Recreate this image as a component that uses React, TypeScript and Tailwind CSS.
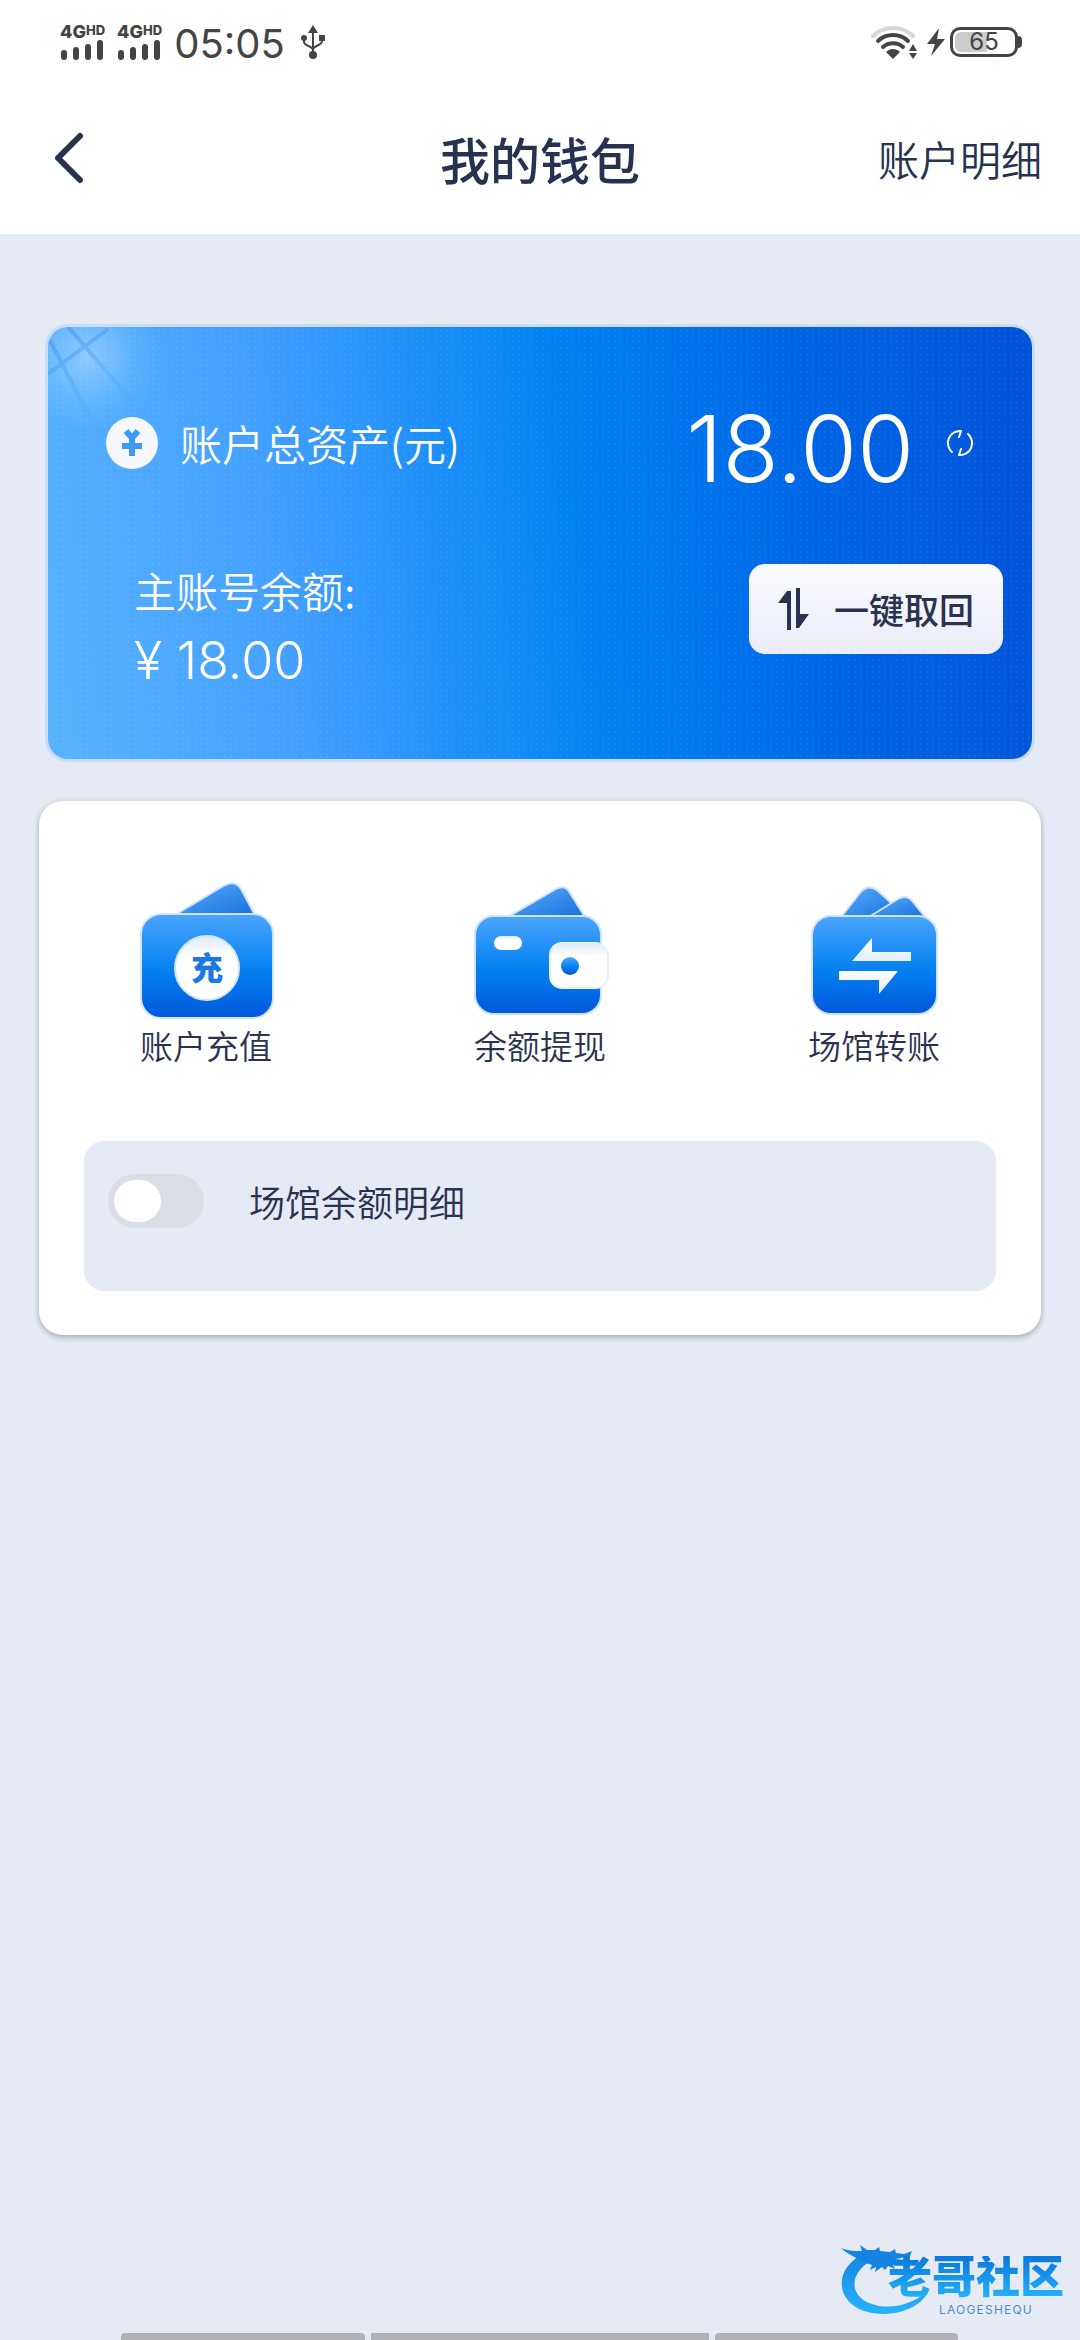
import React, { useState } from "react";

function SignalBars() {
  return (
    <div className="flex flex-col text-[#444]">
      <div className="flex items-start font-extrabold leading-4">
        <span className="text-[18px]">4G</span>
        <span className="text-[13px] leading-3">HD</span>
      </div>
      <div className="flex h-5 items-end gap-[6px] pl-px">
        <span className="h-[10px] w-[6px] rounded-[3px] bg-[#444]" />
        <span className="h-[13px] w-[6px] rounded-[3px] bg-[#444]" />
        <span className="h-[16px] w-[6px] rounded-[3px] bg-[#444]" />
        <span className="h-5 w-[6px] rounded-[3px] bg-[#444]" />
      </div>
    </div>
  );
}

function UsbIcon() {
  return (
    <svg width="24" height="34" viewBox="0 0 24 34" fill="none" stroke="#444" strokeWidth="2">
      <path d="M12 6v24M3 14v3c0 4 9 4 9 8M21 12v4c0 5-9 4-9 9" />
      <path d="M12 0l5 8H7z" fill="#444" stroke="none" />
      <circle cx="12" cy="30" r="4" fill="#444" stroke="none" />
      <circle cx="3" cy="13" r="3" fill="#444" stroke="none" />
      <path d="M18 10h6v6h-6z" fill="#444" stroke="none" />
    </svg>
  );
}

function WifiIcon() {
  return (
    <svg width="48" height="36" viewBox="0 0 48 36" fill="none" strokeLinecap="round">
      <path d="M3 12a29 29 0 0 1 40 0" stroke="#d6d6d6" strokeWidth="4" />
      <path d="M8 17a22 22 0 0 1 30 0" stroke="#444" strokeWidth="4" />
      <path d="M13 23a15 15 0 0 1 20 0" stroke="#444" strokeWidth="4" />
      <path d="M16 28c4-4 10-4 14 0l-7 7z" fill="#444" />
      <path d="M39 27l4-7 4 7zM39 29h8l-4 6z" fill="#444" />
    </svg>
  );
}

function StatusBar() {
  return (
    <div className="flex h-[84px] items-center justify-between pl-[60px] pr-[58px] font-['Inter',sans-serif]">
      <div className="flex items-center">
        <SignalBars />
        <div className="ml-3">
          <SignalBars />
        </div>
        <span className="ml-3 pt-1 text-[40px] leading-10 text-[#444]">05:05</span>
        <div className="ml-4">
          <UsbIcon />
        </div>
      </div>
      <div className="flex items-center">
        <WifiIcon />
        <svg className="ml-2" width="20" height="30" viewBox="0 0 20 30" fill="#444">
          <path d="M13 1L1 17h8L5 29 19 12h-8z" />
        </svg>
        <div className="ml-1 flex items-center">
          <div className="relative flex h-[30px] w-[68px] items-center justify-center rounded-[10px] border-[3px] border-[#444]">
            <span className="absolute inset-y-[2px] left-[2px] w-8 rounded-l-md bg-[#ccc]" />
            <span className="relative text-[24px] leading-6 text-[#444]">65</span>
          </div>
          <span className="h-[12px] w-1 rounded-r-full bg-[#444]" />
        </div>
      </div>
    </div>
  );
}

function Header() {
  return (
    <header className="grid h-[150px] grid-cols-3 items-center px-[38px] pb-[2px] text-[#273250]">
      <button type="button" aria-label="返回" className="w-fit p-[15px]">
        <svg width="32" height="52" viewBox="0 0 32 52" fill="none" stroke="#273250" strokeWidth="6" strokeLinecap="round" strokeLinejoin="round">
          <path d="M27 4L5 26l22 22" />
        </svg>
      </button>
      <h1 className="text-center text-[50px] font-medium leading-[60px]">我的钱包</h1>
      <a href="#detail" className="text-right text-[41px] font-[350] leading-[60px]">
        账户明细
      </a>
    </header>
  );
}

function BalanceCard() {
  return (
    <section className="relative mx-12 overflow-hidden rounded-[20px] bg-[linear-gradient(82deg,#58b3ff_0%,#43a0ff_24%,#0082f2_54%,#0066e6_76%,#0051d8_100%)] pt-[68px] pb-[60px] text-white shadow-[0_0_0_3px_#c9dcf6]">
      {/* Fine dot texture */}
      <div className="absolute inset-0 bg-[radial-gradient(circle,rgba(255,255,255,0.06)_1px,transparent_1px)] bg-[length:6px_6px]" />
      {/* Corner glare */}
      <svg className="absolute left-0 top-0" width="140" height="120" viewBox="0 0 140 120" fill="none">
        <defs>
          <radialGradient id="glare" cx="40" cy="30" r="75" gradientUnits="userSpaceOnUse">
            <stop offset="0" stopColor="#fff" stopOpacity="0.35" />
            <stop offset="0.6" stopColor="#fff" stopOpacity="0.1" />
            <stop offset="1" stopColor="#fff" stopOpacity="0" />
          </radialGradient>
          <linearGradient id="ray" x1="0" y1="0" x2="60" y2="100" gradientUnits="userSpaceOnUse">
            <stop offset="0" stopColor="#3d95f5" stopOpacity="0.6" />
            <stop offset="1" stopColor="#3d95f5" stopOpacity="0" />
          </linearGradient>
        </defs>
        <path d="M0 0h140v120H0z" fill="url(#glare)" />
        <path d="M0 47L60 2M20 0l66 76M2 14l44 84" stroke="url(#ray)" strokeWidth="4" />
      </svg>

      <div className="relative flex h-24 items-center pl-[58px] pr-[58px]">
        <svg width="52" height="52" viewBox="0 0 52 52">
          <circle cx="26" cy="26" r="26" fill="#f6f8fe" />
          <path d="M20 14l6 7 6-7M16 29h20M26 22v17" fill="none" stroke="#3d9bf8" strokeWidth="6" />
        </svg>
        <span className="ml-[22px] text-[42px] font-[350] leading-[60px]">账户总资产(元)</span>
        <span className="ml-auto pt-3 font-['Inter',sans-serif] text-[92px] font-light leading-20">18.00</span>
        <button type="button" aria-label="刷新" className="ml-8">
          <svg width="28" height="28" viewBox="0 0 28 28" fill="none" stroke="#fff" strokeWidth="2" strokeLinecap="round" strokeLinejoin="round">
            <path d="M6 23A12 12 0 0 1 15 2l-2 6M22 5a12 12 0 0 1-9 21l2-6" />
          </svg>
        </button>
      </div>

      <div className="relative mt-[66px] flex items-start justify-between pl-[86px] pr-[29px]">
        <div>
          <p className="text-[42px] font-[350] leading-[66px]">主账号余额:</p>
          <p className="font-['Inter',sans-serif] text-[52px] font-light leading-[76px]">¥ 18.00</p>
        </div>
        <button type="button" className="mt-[7px] flex h-[90px] items-center gap-6 rounded-2xl bg-linear-to-b from-[#fbfcff] to-[#e9ecf9] px-[29px] text-[#2b3150]">
          <svg width="32" height="44" viewBox="0 0 32 44" fill="#2b3150">
            <path d="M9 4h4v39H9V16H0zM18 1h4v26h9L21 41h-3z" />
          </svg>
          <span className="text-[35px] font-medium leading-10">一键取回</span>
        </button>
      </div>
    </section>
  );
}

function WalletDefs() {
  return (
    <svg className="absolute" width="0" height="0" aria-hidden="true">
      <defs>
        <linearGradient id="walletBody" x1="0" y1="0" x2="0" y2="1">
          <stop offset="0" stopColor="#4aa5fc" />
          <stop offset="0.55" stopColor="#0480f0" />
          <stop offset="1" stopColor="#0257dc" />
        </linearGradient>
        <linearGradient id="walletFlap" x1="0" y1="0" x2="1" y2="1">
          <stop offset="0" stopColor="#5aaefc" />
          <stop offset="1" stopColor="#1670dd" />
        </linearGradient>
        <linearGradient id="walletWhite" x1="0" y1="0" x2="0" y2="1">
          <stop offset="0" stopColor="#dcebf5" />
          <stop offset="0.3" stopColor="#fff" />
        </linearGradient>
      </defs>
    </svg>
  );
}

function RechargeIcon() {
  return (
    <svg width="150" height="150" viewBox="0 0 150 150" stroke="#cfe3fb" strokeWidth="2">
      <path d="M44 40L94 10q10-5 16 4l14 26z" fill="url(#walletFlap)" />
      <rect x="10" y="39" width="132" height="104" rx="20" fill="url(#walletBody)" />
      <circle cx="76" cy="93" r="32" fill="url(#walletWhite)" />
      <text x="76" y="105" textAnchor="middle" fontSize="32" fontWeight="900" fill="#1a78e2" stroke="none">
        充
      </text>
    </svg>
  );
}

function WithdrawIcon() {
  return (
    <svg width="150" height="150" viewBox="0 0 150 150" stroke="#cfe3fb" strokeWidth="2">
      <path d="M43 42L91 14q9-5 14 4l15 24z" fill="url(#walletFlap)" />
      <rect x="10" y="41" width="126" height="98" rx="19" fill="url(#walletBody)" />
      <rect x="29" y="61" width="28" height="14" rx="7" fill="url(#walletWhite)" stroke="none" />
      <rect x="85" y="68" width="58" height="45" rx="12" fill="url(#walletWhite)" stroke="#e6f1f9" />
      <circle cx="105" cy="91" r="9" fill="url(#walletBody)" stroke="none" />
    </svg>
  );
}

function TransferIcon() {
  return (
    <svg width="150" height="150" viewBox="0 0 150 150" stroke="#cfe3fb" strokeWidth="2">
      <defs>
        <linearGradient id="arrowFill" x1="0" y1="63" x2="0" y2="119" gradientUnits="userSpaceOnUse">
          <stop offset="0" stopColor="#fff" />
          <stop offset="0.4" stopColor="#e3eefa" />
          <stop offset="0.6" stopColor="#fff" />
          <stop offset="1" stopColor="#dcebfa" />
        </linearGradient>
      </defs>
      <path d="M42 42L61 18q8-10 18-2l22 20v6z" fill="url(#walletFlap)" />
      <path d="M70 42l29-18q9-5 15 3l12 15z" fill="url(#walletFlap)" />
      <rect x="13" y="41" width="125" height="98" rx="19" fill="url(#walletBody)" />
      <path d="M53 86l20-23v14h39v9zM40 96h59l-19 23v-14H40z" fill="url(#arrowFill)" stroke="none" />
    </svg>
  );
}

const actions = [
  { label: "账户充值", icon: <RechargeIcon /> },
  { label: "余额提现", icon: <WithdrawIcon /> },
  { label: "场馆转账", icon: <TransferIcon /> },
];

function ActionsCard() {
  const [open, setOpen] = useState(false);

  return (
    <section className="mx-[39px] mt-[42px] rounded-3xl bg-white pt-[74px] pb-11 shadow-[0_2px_6px_rgba(0,0,0,0.3)]">
      <WalletDefs />
      <div className="grid grid-cols-3">
        {actions.map((action) => (
          <button key={action.label} type="button" className="flex flex-col items-center text-[#2b3150]">
            {action.icon}
            <span className="text-[33px] font-[350] leading-10">{action.label}</span>
          </button>
        ))}
      </div>

      <div className="mx-[45px] mt-[76px] h-[150px] rounded-[20px] bg-[#e6eaf5] pl-6 pt-[33px]">
        <label className="flex w-fit items-center gap-[45px] text-[#2b3150]">
          <input
            type="checkbox"
            checked={open}
            onChange={(e) => setOpen(e.target.checked)}
            className="h-[54px] w-24 appearance-none rounded-full bg-[#d9dde6] p-[6px] before:block before:h-[42px] before:w-[47px] before:rounded-full before:bg-white checked:bg-[#0480f0] checked:before:ml-auto"
          />
          <span className="text-[36px] font-[350] leading-[54px]">场馆余额明细</span>
        </label>
      </div>
    </section>
  );
}

function CommunityLogo() {
  return (
    <div className="absolute bottom-6 right-4 flex h-[72px] w-[224px] justify-end">
      <svg className="absolute left-0 top-0" width="92" height="72" viewBox="0 0 92 72">
        <defs>
          <linearGradient id="dragon" x1="0" y1="0" x2="0" y2="1">
            <stop offset="0" stopColor="#1583e2" />
            <stop offset="1" stopColor="#27b4fb" />
          </linearGradient>
        </defs>
        {/* Tail sweep */}
        <path d="M30 8C-5 18-8 56 24 67c26 8 58-1 66-23-12 15-40 24-61 15C7 50 10 24 38 14z" fill="url(#dragon)" />
        {/* Head */}
        <path
          d="M1 4c7 3 14 3 21 3l-2-6 7 5 8 0 4-3 1 4 10 1 5-3 1 4 8 1 8-3-2 5-9 2-6 1 10 1 5 3-3 5-7-4-7 1 2 4-7-3-3 4-3-3-7 5 1-5-6 3 2-5-9-3C14 12 7 10 1 4z"
          fill="#1583e2"
        />
      </svg>
      <div className="relative flex flex-col items-center gap-1 pt-3">
        <span className="bg-linear-to-b from-[#0b77dc] to-[#27b4fb] bg-clip-text font-['Liberation_Sans','Noto_Sans_CJK_SC',sans-serif] text-[44px] font-black leading-11 text-transparent">
          老哥社区
        </span>
        <span className="pl-5 font-['Inter',sans-serif] text-[12px] leading-3 tracking-widest text-[#4b8fc4]">LAOGESHEQU</span>
      </div>
    </div>
  );
}

export default function App() {
  return (
    <div className="relative flex min-h-screen flex-col bg-[#e6eaf5] font-['Noto_Sans_CJK_SC',sans-serif]">
      <div className="bg-white">
        <StatusBar />
        <Header />
      </div>
      <main className="pt-[93px]">
        <BalanceCard />
        <ActionsCard />
      </main>
      <CommunityLogo />
      {/* Gesture bars */}
      <div className="mt-auto grid grid-cols-[244fr_338fr_243fr] gap-[6px] pl-[121px] pr-[122px]">
        <span className="h-[7px] rounded-t-sm bg-[#b0b1b6]" />
        <span className="h-[7px] bg-[#b0b1b6]" />
        <span className="h-[7px] rounded-t-sm bg-[#b0b1b6]" />
      </div>
    </div>
  );
}
